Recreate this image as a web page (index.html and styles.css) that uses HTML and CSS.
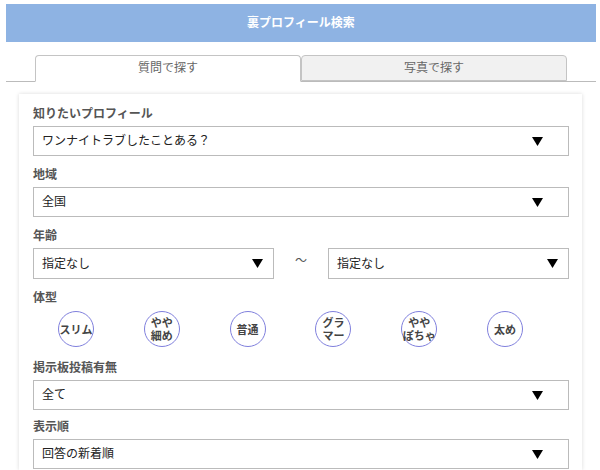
FILE: index.html
```html
<!DOCTYPE html>
<html lang="ja">
<head>
    <meta charset="UTF-8">
    <meta name="viewport" content="width=device-width, initial-scale=1.0">
    <title>裏プロフィール検索</title>
    <link rel="stylesheet" href="styles.css">
</head>
<body>
    <h1>裏プロフィール検索</h1>

    <nav class="tabs">
        <a class="tab active" href="#question">質問で探す</a>
        <a class="tab" href="#photo">写真で探す</a>
    </nav>

    <form class="panel" id="question">
        <div class="field">
            <label class="title" for="profile">知りたいプロフィール</label>
            <select id="profile">
                <option>ワンナイトラブしたことある？</option>
            </select>
        </div>

        <div class="field">
            <label class="title" for="area">地域</label>
            <select id="area">
                <option>全国</option>
            </select>
        </div>

        <div class="field">
            <label class="title" for="age-from">年齢</label>
            <div class="range">
                <select id="age-from">
                    <option>指定なし</option>
                </select>
                <span>～</span>
                <select id="age-to" aria-label="年齢（上限）">
                    <option>指定なし</option>
                </select>
            </div>
        </div>

        <fieldset class="field body-type">
            <legend class="title">体型</legend>
            <div class="types">
                <label class="type"><input type="checkbox" name="type" value="1">スリム</label>
                <label class="type"><input type="checkbox" name="type" value="2">やや<br>細め</label>
                <label class="type"><input type="checkbox" name="type" value="3">普通</label>
                <label class="type"><input type="checkbox" name="type" value="4">グラ<br>マー</label>
                <label class="type"><input type="checkbox" name="type" value="5">やや<br>ぽちゃ</label>
                <label class="type"><input type="checkbox" name="type" value="6">太め</label>
            </div>
        </fieldset>

        <div class="field board">
            <label class="title" for="board">掲示板投稿有無</label>
            <select id="board">
                <option>全て</option>
            </select>
        </div>

        <div class="field">
            <label class="title" for="order">表示順</label>
            <select id="order">
                <option>回答の新着順</option>
            </select>
        </div>
    </form>
</body>
</html>
```

FILE: styles.css
```css
* {
    box-sizing: border-box;
}
body {
    margin: 4px 4px 0 6px;
    background: #fff;
    color: #555;
    font-family: "Noto Sans CJK JP", sans-serif;
    font-size: 12px;
    line-height: 20px;
}
h1 {
    margin: 0;
    padding: 8px 0 10px;
    background: #8eb3e3;
    color: #fff;
    font-size: 12px;
    text-align: center;
}

/* tabs */
.tabs {
    display: flex;
    margin-top: 13px;
    padding: 0 29px;
    border-bottom: 1px solid #bbb;
}
.tab {
    flex: 1;
    padding: 1px 0 3px;
    border: 1px solid #c4c4c4;
    border-radius: 4px 4px 0 0;
    background: #f1f1f1;
    color: #666;
    text-align: center;
    text-decoration: none;
}
.tab.active {
    margin-bottom: -1px;
    border-bottom-color: #fff;
    background: #fff;
}

/* search form */
.panel {
    margin: 12px 14px 0 13px;
    padding: 9px 13px 1px 14px;
    box-shadow: 0 0 4px rgba(0, 0, 0, 0.15);
}
.field {
    margin: 0 0 8px;
    padding: 0;
    border: 0;
}
.field:last-child {
    margin-bottom: 0;
}
.title {
    display: block;
    margin-bottom: 4px;
    padding: 0;
    line-height: 19px;
    font-weight: bold;
}
select {
    display: block;
    width: 100%;
    height: 30px;
    padding: 0 40px 3px 8px;
    border: 1px solid #bbb;
    border-radius: 0;
    appearance: none;
    background: #fff url("data:image/svg+xml,%3Csvg xmlns='http://www.w3.org/2000/svg' width='11' height='9'%3E%3Cpath d='M0 0h11L5.5 9z'/%3E%3C/svg%3E") no-repeat right 25px center;
    color: #222;
    font-family: inherit;
    font-size: 12px;
}
.range {
    display: grid;
    grid-template-columns: 1fr 54px 1fr;
    text-align: center;
}
.range select {
    height: 31px;
    background-position: right 10px center;
}
.range span {
    padding-top: 2px;
}

/* body types */
.body-type {
    margin-bottom: 10px;
}
.types {
    display: grid;
    grid-template-columns: repeat(6, 1fr);
    justify-items: center;
    padding: 1px 21px 0 0;
}
.type {
    display: flex;
    align-items: center;
    justify-content: center;
    width: 36px;
    height: 36px;
    border: 1px solid #8080dd;
    border-radius: 50%;
    color: #444;
    font-size: 11px;
    font-weight: bold;
    line-height: 13px;
    text-align: center;
    white-space: nowrap;
}
.type input {
    position: absolute;
    opacity: 0;
}
.type:has(input:checked) {
    background: #dde;
}
.board {
    margin-bottom: 6px;
}
```
